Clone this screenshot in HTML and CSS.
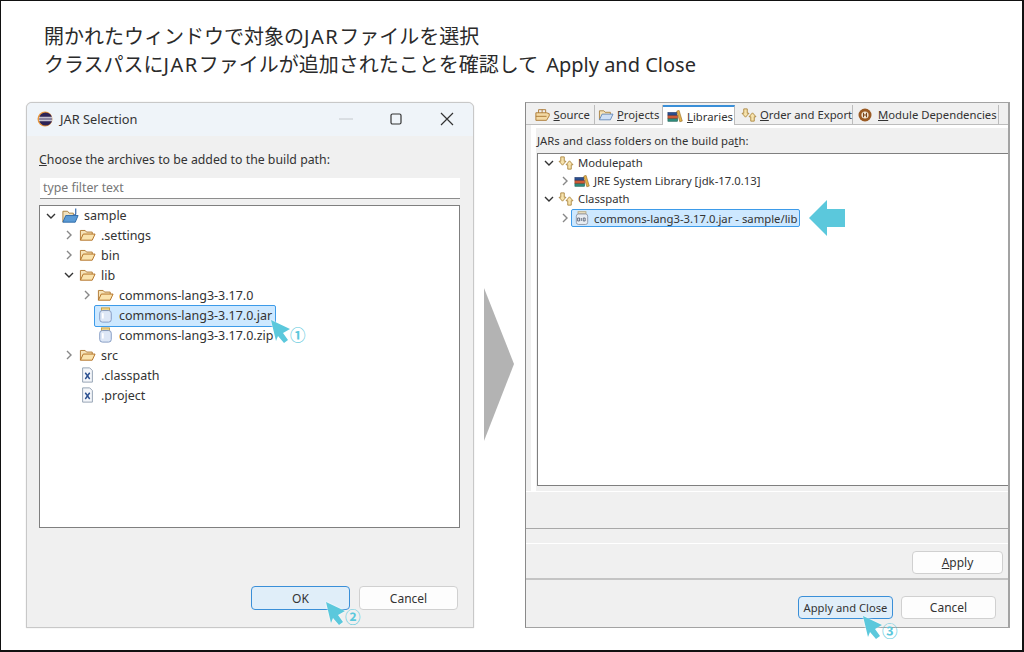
FILE: index.html
```html
<!DOCTYPE html>
<html lang="ja">
<head>
<meta charset="utf-8">
<title>JAR Selection</title>
<link rel="stylesheet" href="styles.css">
</head>
<body>
<svg class="defs" width="0" height="0" aria-hidden="true">
  <defs>
    <symbol id="i-folder" viewBox="0 0 18 16">
      <path d="M1.500 13.500V3.200h5l1.500 1.700h6v2.200" fill="#f6e3b8" stroke="#b07a35"/>
      <path d="M1.500 13.500l3-6.500h12.500l-3 6.500z" fill="#fae3ae" stroke="#b06f22"/>
    </symbol>
    <symbol id="i-project" viewBox="0 0 20 18">
      <path d="M2 15.500V4h5l1.500 2H13v2" fill="#f0e2c0" stroke="#a67f3e"/>
      <path d="M2 15.500l3-7h13l-3 7z" fill="#5b9bd6" stroke="#2f6ba8"/>
      <path d="M15.500 1v5.500c0 1.200-1 1.600-2.400 1.200" fill="none" stroke="#3b6fb0" stroke-width="1.300"/>
    </symbol>
    <symbol id="i-jar" viewBox="0 0 16 18">
      <rect x="3.500" y="1" width="9" height="3" fill="#f0d588" stroke="#c49a3e"/>
      <rect x="1.500" y="4" width="13" height="13" rx="3" fill="#dde7f6" stroke="#7c94bd"/>
      <path d="M5 7v6" stroke="#fff" stroke-width="2"/>
    </symbol>
    <symbol id="i-binjar" viewBox="0 0 16 16">
      <rect x="3.500" y=".8" width="9" height="2.600" fill="#ece2c8" stroke="#b5a67f"/>
      <rect x="1.500" y="3.400" width="13" height="12" rx="2.500" fill="#e8ecf2" stroke="#8a93a3"/>
      <path d="M3 8h2.200v3.400H3zM7.200 8v3.400M9.400 8h2.200v3.400H9.400z" fill="none" stroke="#4a5568" stroke-width=".9"/>
    </symbol>
    <symbol id="i-xml" viewBox="0 0 14 18">
      <path d="M1.500 1h8l3 3v13h-11z" fill="#f4f6fa" stroke="#8b99ad"/>
      <path d="M4.500 6.500l5 7M9.500 6.500l-5 7" stroke="#2b4f8f" stroke-width="1.600"/>
    </symbol>
    <symbol id="i-books" viewBox="0 0 18 14">
      <rect x="1" y="9.500" width="11" height="3.500" fill="#2d8a7b" stroke="#1d5e54" stroke-width=".6"/>
      <rect x="1" y="6" width="11" height="3.500" fill="#d05b35" stroke="#8d3a20" stroke-width=".6"/>
      <rect x="1" y="3" width="10" height="3" fill="#2b4f8f" stroke="#1b3260" stroke-width=".6"/>
      <path d="M11 1.500l2.600-.8 3.600 12-2.800.8z" fill="#e6b24a" stroke="#96702a" stroke-width=".7"/>
    </symbol>
    <symbol id="i-order" viewBox="0 0 18 16">
      <path d="M3 1h4v5h2L5 10.500 1 6h2z" fill="#f7e3ad" stroke="#a9843c"/>
      <path d="M11 15h4v-5h2l-4-4.500L9 10h2z" fill="#f7e3ad" stroke="#a9843c"/>
    </symbol>
    <symbol id="i-package" viewBox="0 0 18 14">
      <path d="M1 13V4.500h12l3 1v2.500l-3 5z" fill="#f3d9a4" stroke="#a9752e"/>
      <path d="M4 4.500V1h8v3.500M8 1v3.500M1 8.500h12" fill="none" stroke="#a9752e"/>
    </symbol>
    <symbol id="i-pfolder" viewBox="0 0 18 16">
      <path d="M1.500 13.500V3.200h5l1.500 1.700h6v2.200" fill="#f6e3b8" stroke="#a67f3e"/>
      <path d="M1.500 13.500l3-6.500h12.500l-3 6.500z" fill="#cfe0f5" stroke="#5f86b8"/>
    </symbol>
    <symbol id="i-pointer" viewBox="0 0 20 24">
      <path d="M0 0l19 9-7 4 5 7-4 3-6-7-2 5z" fill="#5bc8dc"/>
    </symbol>
  </defs>
</svg>

<main class="frame">
  <h1 class="caption">
    <span class="caption-line">開かれたウィンドウで対象の<span class="wide-latin">JAR</span>ファイルを選択</span>
    <span class="caption-line">クラスパスに<span class="wide-latin">JAR</span>ファイルが追加されたことを確認して<span class="latin-gap">Apply and Close</span></span>
  </h1>

  <section class="window jar-window">
    <header class="titlebar">
      <svg class="app-logo" viewBox="0 0 16 16">
        <circle cx="8" cy="8" r="7.500" fill="#e8963c"/>
        <circle cx="8.600" cy="8" r="6.600" fill="#2c2255"/>
        <path d="M2 6.300h13M2 8h13.500M2 9.700h13" stroke="#fff" stroke-width=".9"/>
      </svg>
      <span class="title-text">JAR Selection</span>
      <span class="controls">
        <svg class="control" viewBox="0 0 14 14"><path d="M0 7h14" stroke="#c4c8cc"/></svg>
        <svg class="control" viewBox="0 0 14 14"><rect x="2" y="2" width="10" height="10" rx="1.500" fill="none" stroke="#333" stroke-width="1.200"/></svg>
        <svg class="control" viewBox="0 0 14 14"><path d="M1 1l12 12M13 1L1 13" stroke="#333" stroke-width="1.200"/></svg>
      </span>
    </header>
    <div class="jar-body">
      <p class="prompt"><u>C</u>hoose the archives to be added to the build path:</p>
      <div class="filter">type filter text</div>
      <div class="tree file-tree">
        <div class="row lv0"><svg class="chev" viewBox="0 0 10 10"><path d="M1 3l4 4 4-4" class="chev-open"/></svg><svg class="icon icon-wide"><use href="#i-project"/></svg><span>sample</span></div>
        <div class="row lv1"><svg class="chev" viewBox="0 0 10 10"><path d="M3 1l4 4-4 4" class="chev-closed"/></svg><svg class="icon"><use href="#i-folder"/></svg><span>.settings</span></div>
        <div class="row lv1"><svg class="chev" viewBox="0 0 10 10"><path d="M3 1l4 4-4 4" class="chev-closed"/></svg><svg class="icon"><use href="#i-folder"/></svg><span>bin</span></div>
        <div class="row lv1"><svg class="chev" viewBox="0 0 10 10"><path d="M1 3l4 4 4-4" class="chev-open"/></svg><svg class="icon"><use href="#i-folder"/></svg><span>lib</span></div>
        <div class="row lv2"><svg class="chev" viewBox="0 0 10 10"><path d="M3 1l4 4-4 4" class="chev-closed"/></svg><svg class="icon"><use href="#i-folder"/></svg><span>commons-lang3-3.17.0</span></div>
        <div class="row lv2 selected"><span class="chev"></span><svg class="icon"><use href="#i-jar"/></svg><span>commons-lang3-3.17.0.jar</span></div>
        <div class="row lv2"><span class="chev"></span><svg class="icon"><use href="#i-jar"/></svg><span>commons-lang3-3.17.0.zip</span></div>
        <div class="row lv1"><svg class="chev" viewBox="0 0 10 10"><path d="M3 1l4 4-4 4" class="chev-closed"/></svg><svg class="icon"><use href="#i-folder"/></svg><span>src</span></div>
        <div class="row lv1"><span class="chev"></span><svg class="icon"><use href="#i-xml"/></svg><span>.classpath</span></div>
        <div class="row lv1"><span class="chev"></span><svg class="icon"><use href="#i-xml"/></svg><span>.project</span></div>
      </div>
      <div class="jar-actions">
        <button class="btn btn-default btn-ok">OK</button>
        <button class="btn btn-jar-cancel">Cancel</button>
      </div>
    </div>
  </section>

  <svg class="big-arrow" viewBox="0 0 30 153"><path d="M0 0l30 76L0 153z" fill="#b3b3b3"/></svg>

  <section class="window path-window">
    <nav class="tabs">
      <span class="tab tab-source"><svg class="tab-icon"><use href="#i-package"/></svg><span><u>S</u>ource</span></span>
      <span class="tab tab-projects"><svg class="tab-icon"><use href="#i-pfolder"/></svg><span><u>P</u>rojects</span></span>
      <span class="tab tab-libs"><svg class="tab-icon"><use href="#i-books"/></svg><span><u>L</u>ibraries</span></span>
      <span class="tab tab-order"><svg class="tab-icon"><use href="#i-order"/></svg><span><u>O</u>rder and Export</span></span>
      <span class="tab tab-module">
        <svg class="tab-icon module-icon" viewBox="0 0 14 14"><circle cx="7" cy="7" r="6.500" fill="#9a5a23"/><circle cx="7" cy="7" r="3.600" fill="#f3ead9"/><path d="M5.500 4.800v4.400M8.500 4.800v4.400M5.500 7h3" stroke="#7a4318" stroke-width="1.100"/></svg>
        <span><u>M</u>odule Dependencies</span>
      </span>
    </nav>
    <div class="tab-body">
      <p class="path-label">JARs and class folders on the build pa<u>t</u>h:</p>
      <div class="tree path-tree">
        <div class="prow pl0"><svg class="chev" viewBox="0 0 10 10"><path d="M1 3l4 4 4-4" class="chev-open"/></svg><svg class="picon"><use href="#i-order"/></svg><span>Modulepath</span></div>
        <div class="prow pl1"><svg class="chev" viewBox="0 0 10 10"><path d="M3 1l4 4-4 4" class="chev-closed"/></svg><svg class="picon"><use href="#i-books"/></svg><span>JRE System Library [jdk-17.0.13]</span></div>
        <div class="prow pl0"><svg class="chev" viewBox="0 0 10 10"><path d="M1 3l4 4 4-4" class="chev-open"/></svg><svg class="picon"><use href="#i-order"/></svg><span>Classpath</span></div>
        <div class="prow pl1 prow-selected"><svg class="chev" viewBox="0 0 10 10"><path d="M3 1l4 4-4 4" class="chev-closed"/></svg><span class="sel-box"><svg class="picon"><use href="#i-binjar"/></svg><span>commons-lang3-3.17.0.jar - sample/lib</span></span></div>
      </div>
    </div>
    <div class="blank-band"></div>
    <div class="apply-band"><button class="btn btn-apply"><u>A</u>pply</button></div>
    <div class="close-band">
      <button class="btn btn-default btn-close">Apply and Close</button>
      <button class="btn btn-close-cancel">Cancel</button>
    </div>
  </section>

  <svg class="callout-arrow" viewBox="0 0 36 36"><path d="M0 18L18 0v9h18v18H18v9z" fill="#5bc8dc"/></svg>

  <div class="marker marker-1"><svg class="pointer"><use href="#i-pointer"/></svg><span class="mark-num">①</span></div>
  <div class="marker marker-2"><svg class="pointer"><use href="#i-pointer"/></svg><span class="mark-num">②</span></div>
  <div class="marker marker-3"><svg class="pointer"><use href="#i-pointer"/></svg><span class="mark-num">③</span></div>
</main>
</body>
</html>
```

FILE: styles.css
```css
* { box-sizing: border-box; }
html, body { margin: 0; padding: 0; background: #fff; }
body { font-family: "Noto Sans", "Noto Sans CJK JP", sans-serif; color: #222; }
.defs { position: absolute; }

.frame {
  position: relative;
  width: 1024px;
  height: 652px;
  border: 1.5px solid #111;
  border-width: 1px 2px 2px 1px;
  overflow: hidden;
  background: #fff;
}

.caption {
  margin: 0;
  padding: 22px 0 0 43px;
  font-weight: 400;
  font-size: 20px;
  line-height: 28px;
  color: #2a2a2a;
  font-family: "Noto Sans", "Noto Sans CJK JP", sans-serif;
}
.caption-line { display: block; }
.wide-latin { letter-spacing: 1.500px; }
.latin-gap { margin-left: 8px; }

.window {
  position: absolute;
  display: flex;
  flex-direction: column;
  background: #f0f0f0;
  font-size: 12px;
  color: #333;
  overflow: hidden;
}

/* JAR Selection dialog */
.jar-window {
  left: 25px;
  top: 101px;
  width: 448px;
  height: 526px;
  border: 1px solid #c8c8c8;
  border-radius: 6px 6px 0 0;
  box-shadow: 0 0 1px #bbb;
}
.titlebar {
  display: flex;
  align-items: center;
  height: 33px;
  padding: 0 0 1px 10px;
  background: #eff4f9;
  flex: none;
}
.app-logo { width: 16px; height: 16px; flex: none; }
.title-text { margin-left: 7px; font-size: 12.800px; color: #333; }
.controls { margin-left: auto; display: flex; gap: 36px; padding-right: 19px; }
.control { width: 14px; height: 14px; }
.control:nth-child(2) { margin-left: -1px; margin-right: 1px; }
.control:first-child { margin-right: 1px; }

.jar-body { flex: 1; display: flex; flex-direction: column; padding: 0 13px 0 12px; }
.prompt { margin: 15px 0 0; height: 17px; line-height: 17px; font-size: 12.300px; }
.filter {
  margin: 10px 0 0 1px;
  height: 21px;
  line-height: 20px;
  padding-left: 3px;
  background: #fff;
  border-bottom: 1px solid #8d8d8d;
  color: #777;
  font-size: 12.300px;
}
.tree { background: #fff; border: 1px solid #7f7f7f; }
.file-tree { margin-top: 6px; height: 323px; font-size: 12.500px; }

.row {
  display: flex;
  align-items: center;
  height: 20px;
  position: relative;
  white-space: nowrap;
}
.row:first-child { height: 19px; }
.lv0 { padding-left: 6px; }
.lv1 { padding-left: 24px; }
.lv2 { padding-left: 42px; }
.chev { width: 10px; height: 10px; flex: none; margin-right: 5px; }
.chev-open { fill: none; stroke: #333; stroke-width: 1.400; }
.chev-closed { fill: none; stroke: #888; stroke-width: 1.400; }
.icon { width: 17px; height: 16px; flex: none; margin-right: 5px; }
.icon-wide { width: 19px; height: 18px; margin-right: 4px; }
.selected::before {
  content: "";
  position: absolute;
  left: 54px;
  top: 0;
  width: 180px;
  height: 20px;
  background: #cde8ff;
  border: 1px solid #3d9be9;
  border-radius: 2px;
}
.row > * { position: relative; }

.jar-actions { display: flex; justify-content: flex-end; gap: 9px; margin: 58px 2px 0 0; }

.btn {
  font: inherit;
  color: #333;
  background: #fdfdfd;
  border: 1px solid #d0d0d0;
  border-radius: 4px;
  padding: 0;
  height: 25px;
}
.btn-default { background: #e0eef9; border: 1.500px solid #3a8fd8; }
.btn-ok { width: 99px; height: 24px; }
.btn-jar-cancel { width: 99px; height: 24px; }

/* Build path page */
.path-window {
  left: 524px;
  top: 101px;
  width: 485px;
  height: 526px;
  border: 1.500px solid #a3a3a3;
  border-right-width: 2px;
  border-left-color: #8a8a8a;
}
.tabs {
  display: flex;
  align-items: stretch;
  height: 22px;
  flex: none;
  padding: 2px 0 0 6px;
  border-bottom: 1px solid #bdbdbd;
  background: #f0f0f0;
  font-size: 11.300px;
}
.tab {
  display: flex;
  align-items: center;
  border-right: 1px solid #bcbcbc;
  white-space: nowrap;
  padding-left: 3px;
}
.tab-icon { width: 16px; height: 14px; flex: none; margin-right: 3px; }
.module-icon { width: 14px; height: 14px; margin: 0 6px 0 0; }
.tab-source { width: 63px; padding-left: 2.500px; }
.tab-projects { width: 68px; }
.tab-libs {
  width: 72px;
  padding-left: 4px;
  background: #fff;
  border-top: 2px solid #3a8fd8;
  height: 20px;
  flex: none;
}
.tab-libs .tab-icon { margin-right: 4px; }
.tab-order { width: 118px; padding-left: 6px; }
.tab-module { width: 146px; padding-left: 5px; }

.tab-body {
  flex: none;
  margin-left: 5px;
  padding-left: 6px;
  height: 366px;
  border-top: 3px solid #fff;
  box-shadow: inset 5px 0 0 #fff;
  background: #f0f0f0;
}
.path-label { margin: 4px 0 0; height: 17px; line-height: 17px; font-size: 11.300px; }
.path-tree {
  margin-top: 4px;
  height: 333px;
  border-right: none;
}
.prow {
  display: flex;
  align-items: center;
  height: 18px;
  padding-bottom: 1px;
  white-space: nowrap;
  font-size: 11.300px;
}
.prow-selected { margin-top: 1px; padding-bottom: 0; }
.pl0 { padding-left: 6px; }
.pl1 { padding-left: 22px; }
.picon { width: 16px; height: 14px; flex: none; margin-right: 4px; }
.prow .chev { margin-right: 4px; }
.sel-box {
  display: flex;
  align-items: center;
  width: 229px;
  height: 18px;
  margin-left: -3px;
  padding-left: 2px;
  background: #cde8ff;
  border: 1px solid #3d9be9;
  border-radius: 2px;
}
.blank-band {
  flex: none;
  height: 38px;
  border-top: 1px solid #fff;
  border-bottom: 1px solid #a8a8a8;
}
.apply-band {
  flex: none;
  height: 51px;
  border-bottom: 2px solid #c4c4c4;
  background: linear-gradient(#f0f0f0 14px, #fff 14px, #fff 15px, #f0f0f0 15px);
  display: flex;
  justify-content: flex-end;
  padding: 22px 5px 0 0;
}
.btn-apply { width: 91px; height: 23px; }
.close-band {
  flex: 1;
  display: flex;
  justify-content: flex-end;
  gap: 8px;
  padding: 16px 12px 0 0;
}
.btn-close { width: 95px; height: 23px; font-size: 11.200px; }
.btn-close-cancel { width: 95px; height: 23px; }

/* Annotations over the screenshots */
.big-arrow { position: absolute; left: 483px; top: 287px; width: 30px; height: 153px; }
.callout-arrow { position: absolute; left: 808px; top: 199px; width: 36px; height: 36px; }
.marker { position: absolute; width: 40px; height: 26px; }
.marker-1 { left: 270px; top: 319px; }
.marker-2 { left: 325px; top: 601px; }
.marker-3 { left: 862px; top: 615px; }
.pointer {
  position: absolute;
  left: 0;
  top: 0;
  width: 20px;
  height: 24px;
  filter: drop-shadow(0 0 1px #fff);
}
.mark-num {
  position: absolute;
  left: 19px;
  top: 5px;
  font-size: 15.500px;
  line-height: 18px;
  font-weight: 700;
  color: #5bc8dc;
  font-family: "Noto Sans CJK JP", sans-serif;
}
```
